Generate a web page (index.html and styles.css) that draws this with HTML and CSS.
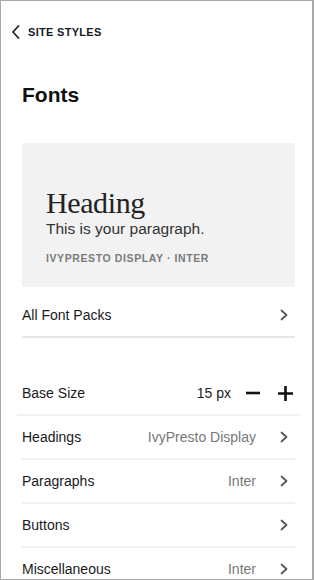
FILE: index.html
```html
<!DOCTYPE html>
<html lang="en">
<head>
<meta charset="UTF-8" />
<meta name="viewport" content="width=device-width, initial-scale=1.0" />
<title>Site Styles - Fonts</title>
<link rel="stylesheet" href="styles.css">
</head>
<body>

<div class="panel">
  <!-- Back link -->
  <a class="back" href="#">
    <svg width="10" height="14" viewBox="0 0 10 14"><path d="M7.5 1 L2 7 L7.5 13" /></svg>
    <span>SITE STYLES</span>
  </a>

  <h1 class="title">Fonts</h1>

  <!-- Font preview -->
  <div class="preview">
    <div class="preview-heading">Heading</div>
    <div class="preview-text">This is your paragraph.</div>
    <div class="preview-label">IVYPRESTO DISPLAY · INTER</div>
  </div>

  <div class="row">
    <span class="row-name">All Font Packs</span>
    <svg class="chev" width="16" height="16" viewBox="0 0 16 16"><path d="M5.5 3.5 L10.5 8 L5.5 12.5" /></svg>
  </div>

  <div class="row row-size">
    <span class="row-name">Base Size</span>
    <span class="size-value">15 px</span>
    <svg class="size-btn minus" width="14" height="14" viewBox="0 0 14 14"><path d="M0 7 H14" /></svg>
    <svg class="size-btn plus" width="15" height="15" viewBox="0 0 15 15"><path d="M0 7.5 H15 M7.5 0 V15" /></svg>
  </div>

  <div class="row">
    <span class="row-name">Headings</span>
    <span class="row-value">IvyPresto Display</span>
    <svg class="chev" width="16" height="16" viewBox="0 0 16 16"><path d="M5.5 3.5 L10.5 8 L5.5 12.5" /></svg>
  </div>

  <div class="row">
    <span class="row-name">Paragraphs</span>
    <span class="row-value">Inter</span>
    <svg class="chev" width="16" height="16" viewBox="0 0 16 16"><path d="M5.5 3.5 L10.5 8 L5.5 12.5" /></svg>
  </div>

  <div class="row">
    <span class="row-name">Buttons</span>
    <span class="row-value"></span>
    <svg class="chev" width="16" height="16" viewBox="0 0 16 16"><path d="M5.5 3.5 L10.5 8 L5.5 12.5" /></svg>
  </div>

  <div class="row">
    <span class="row-name">Miscellaneous</span>
    <span class="row-value">Inter</span>
    <svg class="chev" width="16" height="16" viewBox="0 0 16 16"><path d="M5.5 3.5 L10.5 8 L5.5 12.5" /></svg>
  </div>
</div>

</body>
</html>
```

FILE: styles.css
```css
/* Page */
body {
  margin: 0;
  font-family: "Liberation Sans", Arial, sans-serif;
  color: #1a1a1a;
  background: #fff;
}

.panel {
  box-sizing: border-box;
  width: 314px;
  height: 580px;
  overflow: hidden;
  border: 1px solid #a9a9a9;
  border-right-width: 2px;
  padding: 21px 17px 0 21px;
  background: #fff;
}

/* Back link */
.back {
  display: flex;
  align-items: center;
  gap: 7px;
  height: 20px;
  margin-left: -11px;
  color: #1a1a1a;
  text-decoration: none;
  font-size: 11px;
  font-weight: bold;
  letter-spacing: 0.3px;
}

.back svg path {
  fill: none;
  stroke: #222;
  stroke-width: 1.8;
  stroke-linecap: round;
  stroke-linejoin: round;
}

.title {
  margin: 39px 0 0;
  font-size: 21px;
  line-height: 28px;
  font-weight: bold;
  color: #111;
}

/* Preview card */
.preview {
  box-sizing: border-box;
  height: 144px;
  margin-top: 34px;
  padding: 45px 24px 0;
  background: #f2f2f2;
  border-radius: 3px;
}

.preview-heading {
  font-family: "Liberation Serif", "Times New Roman", serif;
  font-size: 30px;
  line-height: 30px;
  letter-spacing: -0.4px;
  color: #222;
}

.preview-text {
  margin-top: 2px;
  font-size: 15.5px;
  line-height: 18px;
  color: #333;
}

.preview-label {
  margin-top: 13px;
  font-size: 10.5px;
  line-height: 14px;
  font-weight: bold;
  letter-spacing: 0.6px;
  color: #7a7a7a;
}

/* Rows */
.row {
  display: flex;
  align-items: center;
  height: 42px;
  border-bottom: 2px solid #f1f1f1;
  font-size: 14px;
}

.preview + .row {
  margin-top: 7px;
  border-bottom-color: #e6e6e6;
}

.row-name {
  flex: 1;
}

.row-value {
  margin-right: 20px;
  color: #777;
}

.chev {
  margin-right: 3px;
}

.chev path {
  fill: none;
  stroke: #555;
  stroke-width: 1.7;
  stroke-linecap: round;
  stroke-linejoin: round;
}

/* Base size row */
.row-size {
  margin: 34px -5px 0;
  padding: 0 5px;
}

.size-value {
  color: #222;
}

.size-btn path {
  fill: none;
  stroke: #111;
  stroke-width: 2.6;
}

.minus {
  margin-left: 15px;
}

.plus {
  margin-left: 18px;
  margin-right: 2px;
}
```
